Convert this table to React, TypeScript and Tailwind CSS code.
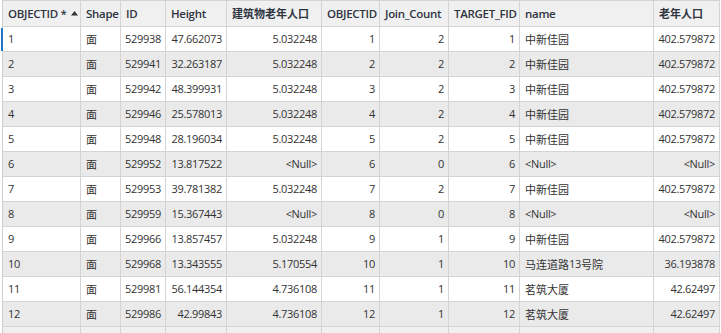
import React from "react";

const cols = [
  { h: "OBJECTID *", w: 78, a: "l" },
  { h: "Shape", w: 40, a: "l" },
  { h: "ID", w: 45, a: "r" },
  { h: "Height", w: 61, a: "r" },
  { h: "建筑物老年人口", w: 95, a: "r" },
  { h: "OBJECTID", w: 58, a: "r" },
  { h: "Join_Count", w: 69, a: "r" },
  { h: "TARGET_FID", w: 71, a: "r" },
  { h: "name", w: 134, a: "l" },
  { h: "老年人口", w: 66, a: "r" },
];

const N = "<Null>";
const rows: string[][] = [
  ["1", "面", "529938", "47.662073", "5.032248", "1", "2", "1", "中新佳园", "402.579872"],
  ["2", "面", "529941", "32.263187", "5.032248", "2", "2", "2", "中新佳园", "402.579872"],
  ["3", "面", "529942", "48.399931", "5.032248", "3", "2", "3", "中新佳园", "402.579872"],
  ["4", "面", "529946", "25.578013", "5.032248", "4", "2", "4", "中新佳园", "402.579872"],
  ["5", "面", "529948", "28.196034", "5.032248", "5", "2", "5", "中新佳园", "402.579872"],
  ["6", "面", "529952", "13.817522", N, "6", "0", "6", N, N],
  ["7", "面", "529953", "39.781382", "5.032248", "7", "2", "7", "中新佳园", "402.579872"],
  ["8", "面", "529959", "15.367443", N, "8", "0", "8", N, N],
  ["9", "面", "529966", "13.857457", "5.032248", "9", "1", "9", "中新佳园", "402.579872"],
  ["10", "面", "529968", "13.343555", "5.170554", "10", "1", "10", "马连道路13号院", "36.193878"],
  ["11", "面", "529981", "56.144354", "4.736108", "11", "1", "11", "茗筑大厦", "42.62497"],
  ["12", "面", "529986", "42.99843", "4.736108", "12", "1", "12", "茗筑大厦", "42.62497"],
];

const tpl = cols.map((c) => `${c.w}px`).join(" ");
const cjkRe = /[\u4e00-\u9fff]/;

function T({ v }: { v: string }) {
  if (!cjkRe.test(v)) return <>{v}</>;
  const parts = v.match(/[\u4e00-\u9fff]+|[^\u4e00-\u9fff]+/g) || [];
  return (
    <>
      {parts.map((p, i) =>
        cjkRe.test(p) ? (
          <span
            key={i}
            className="tracking-normal text-[11px]"
            style={{ fontFamily: '"Noto Sans CJK SC", sans-serif' }}
          >
            {p}
          </span>
        ) : (
          <span key={i}>{p}</span>
        )
      )}
    </>
  );
}

export default function App() {
  return (
    <div
      className="w-[721px] h-[333px] overflow-hidden bg-white text-[#333] text-[11px] tracking-[-0.3px]"
      style={{ fontFamily: '"Open Sans", "Noto Sans CJK SC", sans-serif' }}
    >
      <div className="relative ml-[2px] border-l border-[#cfcfcf] w-[718px]">
        <div
          className="grid h-[27px] bg-[#f0f0f0] border-t border-b border-[#d4d4d4]"
          style={{ gridTemplateColumns: tpl }}
        >
          {cols.map((c, i) => (
            <div
              key={i}
              className="flex items-center pl-[5px] pr-[2px] border-r border-[#d4d4d4] font-semibold text-[11.5px] text-[#2e3440] whitespace-nowrap overflow-hidden"
            >
              <T v={c.h} />
              {i === 0 && (
                <svg width="7" height="6" viewBox="0 0 7 6" className="ml-[4px] mb-[1px]">
                  <path d="M0 5.5 L3.5 1 L7 5.5 Z" fill="#333" />
                </svg>
              )}
            </div>
          ))}
        </div>
        {rows.map((r, ri) => (
          <div
            key={ri}
            className={`relative grid h-[25px] border-b border-[#d4d4d4] ${ri % 2 === 1 ? "bg-[#eaeaea]" : "bg-white"}`}
            style={{ gridTemplateColumns: tpl }}
          >
            {ri === 0 && (
              <div className="absolute left-[-2px] top-[1px] w-[2px] h-[23px] bg-[#1e78c8]" />
            )}
            {r.map((v, ci) => (
              <div
                key={ci}
                className={`flex items-center px-[5px] border-r border-[#d4d4d4] whitespace-nowrap overflow-hidden ${
                  cols[ci].a === "r" ? "justify-end pr-[4px]" : "justify-start"
                }`}
              >
                <T v={v} />
              </div>
            ))}
          </div>
        ))}
        <div className="grid h-[10px] bg-[#f0f0f0]" style={{ gridTemplateColumns: tpl }}>
          {cols.map((_, i) => (
            <div key={i} className="border-r border-[#d4d4d4]" />
          ))}
        </div>
      </div>
    </div>
  );
}
